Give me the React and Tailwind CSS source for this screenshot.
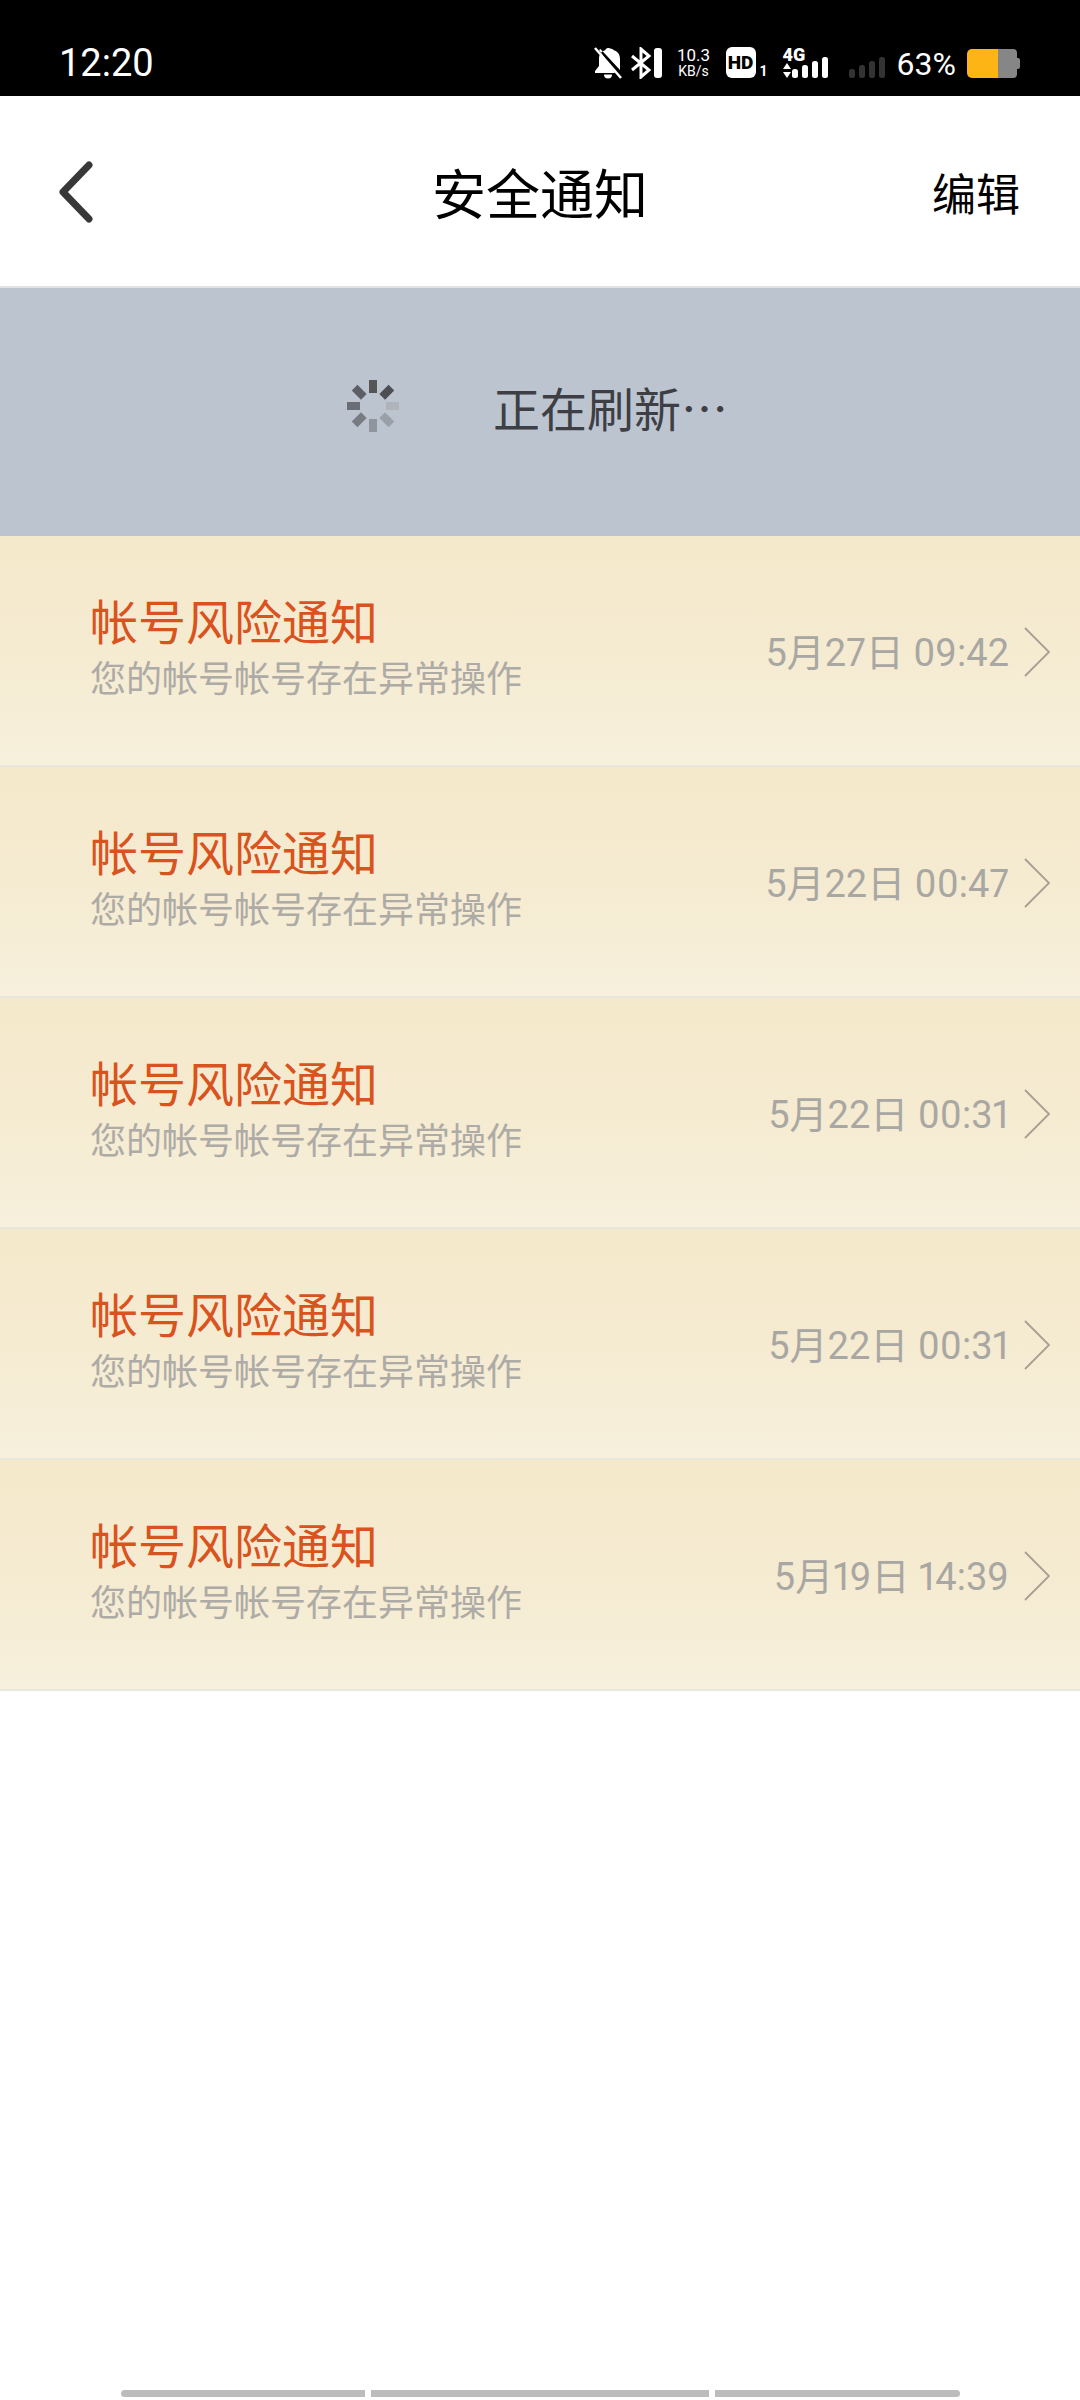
const CJK = 'font-["Roboto","Noto_Sans_CJK_SC",sans-serif]';
const CJK_ONLY = 'font-["Noto_Sans_CJK_SC",sans-serif]';

const rows = ['5月27日 09:42', '5月22日 00:47', '5月22日 00:31', '5月22日 00:31', '5月19日 14:39'];

function BellOff() {
    return (
        <svg width="28" height="32" viewBox="0 0 28 32">
            <path d="M14 1c-1.500 0-2.500 1-2.800 2.300C7 4.500 5 8 5 12v7l-4 5v2h20L5 3l1.500-1L26 23V12c0-4-2-7.500-6.200-8.700C19.500 2 15.500 1 14 1z" fill="#fff" />
            <path d="M10 27.500h8a4 4 0 0 1-8 0z" fill="#fff" />
            <path d="M1 1l26 30" stroke="#fff" strokeWidth="2.500" />
        </svg>
    );
}

function Bluetooth() {
    return (
        <svg width="32" height="32" viewBox="0 0 32 32">
            <path d="M2 9l17 14-8 7V2l8 7L2 23" fill="none" stroke="#fff" strokeWidth="3" />
            <rect x="24" y="1" width="8" height="30" rx="3" fill="#fff" />
        </svg>
    );
}

function SignalBars({ color }) {
    return (
        <svg width="36" height="22" viewBox="0 0 36 22">
            <rect x="0" y="12" width="6" height="9" rx="2.500" fill={color} />
            <rect x="10" y="8" width="6" height="13" rx="2.500" fill={color} />
            <rect x="20" y="4" width="6" height="17" rx="2.500" fill={color} />
            <rect x="30" y="0" width="6" height="21" rx="2.500" fill={color} />
        </svg>
    );
}

function Battery() {
    return (
        <svg width="54" height="30" viewBox="0 0 54 30">
            <path d="M6 0h26v29H6a5 5 0 0 1-5-5V5a5 5 0 0 1 5-5z" fill="#fdb515" />
            <path d="M32 0h15a4 4 0 0 1 4 4v21a4 4 0 0 1-4 4H32z" fill="#868686" />
            <path d="M51 9h1a2 2 0 0 1 2 2v7a2 2 0 0 1-2 2h-1z" fill="#868686" />
        </svg>
    );
}

function Spinner() {
    const spokes = [
        [0, '#555'], [45, '#4c4e52'], [90, '#b0b4ba'], [135, '#9aa0a8'],
        [180, '#90949c'], [225, '#777b82'], [270, '#6a6d73'], [315, '#5c5f65'],
    ];
    return (
        <svg width="56" height="56" viewBox="-28 -28 56 56">
            {spokes.map(([deg, color]) => (
                <rect key={deg} x="-4" y="-26" width="8" height="13" fill={color} transform={`rotate(${deg})`} />
            ))}
        </svg>
    );
}

function StatusBar() {
    return (
        <div className="h-24 bg-black flex items-start justify-between text-white pl-[59px] pr-[60px] pt-[47px]">
            <span className={`text-[38px] leading-[32px] ${CJK}`}>12:20</span>
            <div className="flex items-start">
                <BellOff />
                <div className="ml-2"><Bluetooth /></div>
                <div className={`ml-[14px] w-9 flex flex-col items-center ${CJK}`}>
                    <span className="text-[17px] leading-[17px]">10.3</span>
                    <span className="text-[14px] leading-[15px]">KB/s</span>
                </div>
                <div className="ml-[14px] w-[30px] h-[31px] bg-white rounded-md flex items-center justify-center">
                    <span className={`text-[19px] leading-none font-black text-black ${CJK}`}>HD</span>
                </div>
                <span className={`ml-1 mt-[17px] text-[14px] leading-[15px] font-bold ${CJK}`}>1</span>
                <div className="ml-[15px] relative w-11 h-[32px]">
                    <span className={`block text-[18px] leading-[15px] font-black ${CJK}`}>4G</span>
                    <svg className="absolute left-0 top-[16px]" width="8" height="15" viewBox="0 0 8 15">
                        <path d="M4 0l4 6H0zM0 9h8l-4 6z" fill="#fff" />
                    </svg>
                    <div className="absolute left-[9px] top-[10px]"><SignalBars color="#fff" /></div>
                </div>
                <div className="ml-[22px] mt-[10px]"><SignalBars color="#333" /></div>
                <span className={`ml-3 mt-[2px] text-[32px] leading-[30px] ${CJK}`}>63%</span>
                <div className="ml-[10px] mt-[2px]"><Battery /></div>
            </div>
        </div>
    );
}

function Row({ date }) {
    return (
        <div className="h-[231px] flex items-center bg-gradient-to-b from-[#f5e9cb] via-[#f5ebd1] to-[#f7f0dc] border-b-2 border-[#e8e6de] pl-[90px] pr-[30px]">
            <div className="flex-1 flex flex-col pt-[2px]">
                <span className={`text-[48px] leading-[56px] text-[#d9531e] ${CJK}`}>帐号风险通知</span>
                <span className={`text-[36px] leading-[56px] text-[#aeaba6] ${CJK}`}>您的帐号帐号存在异常操作</span>
            </div>
            <span className={`text-[38px] mt-[6px] text-[#a9a7a3] [font-variant-numeric:proportional-nums] ${CJK}`}>{date}</span>
            <svg className="ml-[15px] mt-[2px]" width="26" height="50" viewBox="0 0 26 50">
                <path d="M1 1l24 24L1 49" fill="none" stroke="#a89e92" strokeWidth="1.800" />
            </svg>
        </div>
    );
}

export default function App() {
    return (
        <div className="w-[1080px] h-[2400px] bg-white flex flex-col overflow-hidden">
            <StatusBar />

            {/* Title bar */}
            <div className="h-[192px] flex items-center justify-between border-b-2 border-[#e2e2e2] pl-[59px] pr-[60px] relative">
                <svg className="mt-[2px]" width="34" height="62" viewBox="0 0 34 62">
                    <path d="M30 4L4 31l26 27" fill="none" stroke="#383838" strokeWidth="7" strokeLinecap="round" strokeLinejoin="round" />
                </svg>
                <span className={`absolute left-0 right-0 pt-[10px] text-center text-[54px] text-black ${CJK}`}>安全通知</span>
                <span className={`pt-[10px] text-[44px] text-black ${CJK}`}>编辑</span>
            </div>

            {/* Pull to refresh */}
            <div className="h-[248px] bg-[#bcc4d0] flex items-center pl-[345px]">
                <div className="mb-[12px]"><Spinner /></div>
                <span className={`ml-[92px] mb-[10px] text-[47px] text-[#3d3f44] ${CJK_ONLY}`}>正在刷新…</span>
            </div>

            <div className="flex flex-col">
                {rows.map((date, i) => (
                    <Row key={i} date={date} />
                ))}
            </div>

            <div className="flex-1" />

            {/* Scroll handle */}
            <div className="flex gap-[6px] pl-[121px] pr-[120px] pb-[3px]">
                <div className="w-[244px] h-[7px] bg-[#bcbcbc] rounded-l-full" />
                <div className="flex-1 h-[7px] bg-[#bcbcbc]" />
                <div className="w-[245px] h-[7px] bg-[#bcbcbc] rounded-r-full" />
            </div>
        </div>
    );
}
